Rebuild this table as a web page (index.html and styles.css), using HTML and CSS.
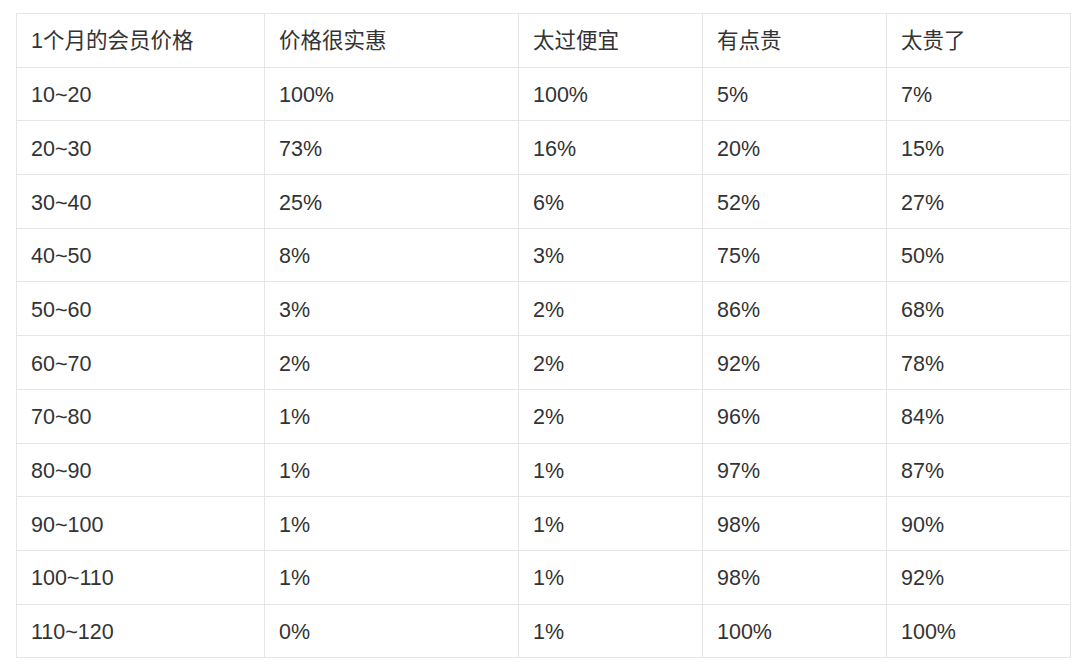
FILE: index.html
```html
<!DOCTYPE html>
<html lang="zh">
<head>
<meta charset="utf-8">
<link rel="stylesheet" href="styles.css">
</head>
<body>
<table class="price-table">
  <colgroup>
    <col class="c1"><col class="c2"><col class="c3"><col class="c4"><col class="c5">
  </colgroup>
  <tr><td>1个月的会员价格</td><td>价格很实惠</td><td>太过便宜</td><td>有点贵</td><td>太贵了</td></tr>
  <tr><td>10~20</td><td>100%</td><td>100%</td><td>5%</td><td>7%</td></tr>
  <tr><td>20~30</td><td>73%</td><td>16%</td><td>20%</td><td>15%</td></tr>
  <tr><td>30~40</td><td>25%</td><td>6%</td><td>52%</td><td>27%</td></tr>
  <tr><td>40~50</td><td>8%</td><td>3%</td><td>75%</td><td>50%</td></tr>
  <tr><td>50~60</td><td>3%</td><td>2%</td><td>86%</td><td>68%</td></tr>
  <tr><td>60~70</td><td>2%</td><td>2%</td><td>92%</td><td>78%</td></tr>
  <tr><td>70~80</td><td>1%</td><td>2%</td><td>96%</td><td>84%</td></tr>
  <tr><td>80~90</td><td>1%</td><td>1%</td><td>97%</td><td>87%</td></tr>
  <tr><td>90~100</td><td>1%</td><td>1%</td><td>98%</td><td>90%</td></tr>
  <tr><td>100~110</td><td>1%</td><td>1%</td><td>98%</td><td>92%</td></tr>
  <tr><td>110~120</td><td>0%</td><td>1%</td><td>100%</td><td>100%</td></tr>
</table>
</body>
</html>
```
FILE: styles.css
```css
html, body {
  background: #ffffff;
}
body {
  margin: 13px 0 0 16px;
  font-family: "Liberation Sans", "Noto Sans CJK SC", sans-serif;
  font-size: 21.5px;
  color: #333333;
}
.price-table {
  border-collapse: collapse;
  table-layout: fixed;
  width: 1055px;
}
.c1 { width: 248px; }
.c2 { width: 254px; }
.c3 { width: 184px; }
.c4 { width: 184px; }
.c5 { width: 184px; }
.price-table tr {
  height: 53.7px;
}
.price-table td {
  border: 1px solid #e6e6e6;
  padding: 4px 14px 0;
  vertical-align: middle;
  line-height: 1.2;
  white-space: nowrap;
}
```
